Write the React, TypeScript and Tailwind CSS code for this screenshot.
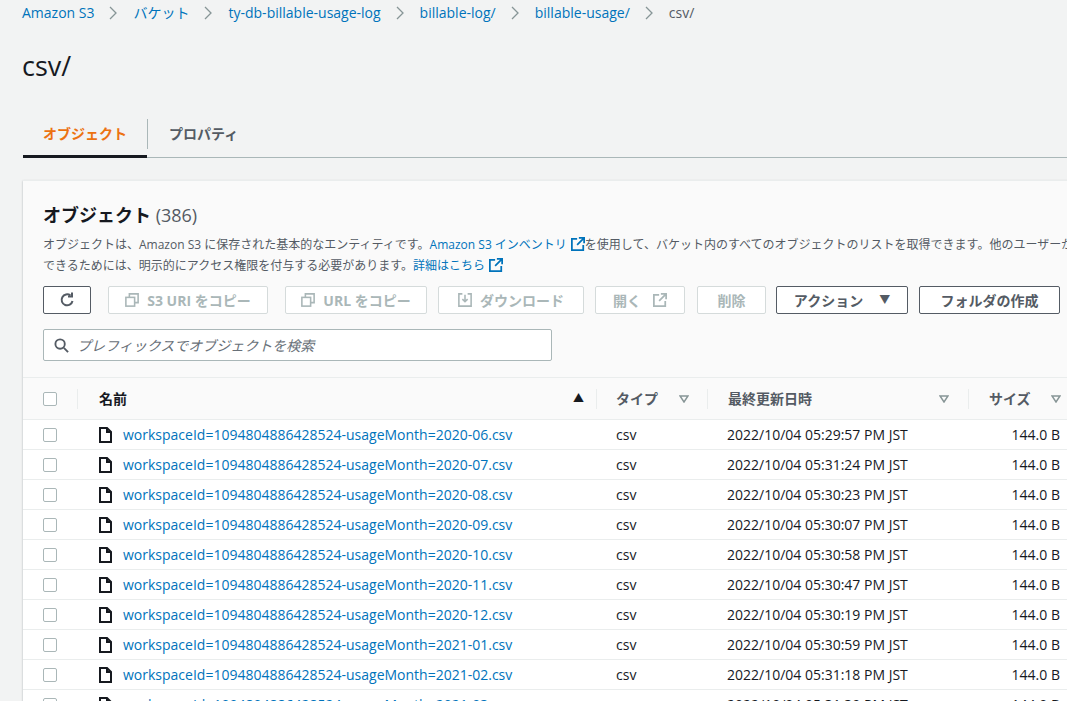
import React from "react";

const F = { fontFamily: '"Open Sans", "Noto Sans CJK JP", sans-serif' };

const months = ["2020-06", "2020-07", "2020-08", "2020-09", "2020-10", "2020-11", "2020-12", "2021-01", "2021-02", "2021-03"];
const times = ["05:29:57", "05:31:24", "05:30:23", "05:30:07", "05:30:58", "05:30:47", "05:30:19", "05:30:59", "05:31:18", "05:31:39"];

const Ext = () => (
  <svg width="14" height="14" viewBox="0 0 16 16" className="inline-block align-[-2px] ml-1" fill="none" stroke="currentColor" strokeWidth="2">
    <path d="M9 1h6v6M15 1L7 9M7 2H1v13h13V9" />
  </svg>
);

const Copy = () => (
  <svg width="14" height="14" viewBox="0 0 16 16" fill="none" stroke="currentColor" strokeWidth="1.8">
    <rect x="1" y="5" width="10" height="10" />
    <path d="M5 5V1h10v10h-4" />
  </svg>
);

const FileIcon = () => (
  <svg width="13" height="16" viewBox="0 0 13 16" fill="none" stroke="#16191f" strokeWidth="2">
    <path d="M1 1h7l4 4v10H1z M8 1v4h4" />
  </svg>
);

const Tri = () => (
  <svg width="10" height="8" viewBox="0 0 10 8" fill="none" stroke="#879596" strokeWidth="1.5">
    <path d="M1 1h8L5 7z" />
  </svg>
);

const Box = () => <div className="w-[14px] h-[14px] border border-[#aab7b8] rounded-[2px] bg-white" />;

function Btn({ w, ml, disabled, children }: { w: number; ml: number; disabled?: boolean; children: React.ReactNode }) {
  return (
    <div
      style={{ width: w, marginLeft: ml }}
      className={`h-[28px] flex items-center justify-center gap-2 rounded-[2px] text-[14px] font-bold shrink-0 ${
        disabled ? "border border-[#d5dbdb] text-[#aab7b8] bg-white" : "border border-[#545b64] text-[#545b64] bg-white"
      }`}
    >
      {children}
    </div>
  );
}

export default function App() {
  return (
    <div style={F} className="w-[1067px] h-[701px] overflow-hidden bg-[#f2f3f3] text-[#16191f]">
      <div className="pl-[22px] pt-[5px] flex items-center gap-[15px] text-[14px] h-[20px]">
        {["Amazon S3", "バケット", "ty-db-billable-usage-log", "billable-log/", "billable-usage/"].map((t) => (
          <React.Fragment key={t}>
            <span className="text-[#0073bb]">{t}</span>
            <span className="text-[#879596]">
              <svg width="9" height="14" viewBox="0 0 9 14" fill="none" stroke="currentColor" strokeWidth="1.3"><path d="M1 1l6 6-6 6" /></svg>
            </span>
          </React.Fragment>
        ))}
        <span className="text-[#545b64]">csv/</span>
      </div>
      <div className="pl-[22px] mt-[28px] text-[27px] leading-[36px]">csv/</div>

      <div className="ml-[23px] mt-[26px] flex items-center border-b border-[#aab7b8] h-[48px]">
        <div className="w-[124px] h-full flex items-center justify-center text-[14px] font-bold text-[#ec7211] border-b-[3px] border-[#16191f] -mb-[1px] pt-[2px]">オブジェクト</div>
        <div className="w-px h-[30px] bg-[#aab7b8]" />
        <div className="px-[21px] text-[14px] font-bold text-[#545b64]">プロパティ</div>
      </div>

      <div className="ml-[23px] mt-[22px] w-[1100px] bg-[#fafafa] shadow-[0_1px_2px_rgba(0,28,36,0.3)] border-t border-[#eaeded]">
        <div className="px-[20px] pt-[22px]">
          <div className="text-[18px] font-bold leading-[24px]">
            オブジェクト <span className="font-normal text-[#545b64]">(386)</span>
          </div>
          <div className="mt-[7px] text-[12px] leading-[21px] text-[#545b64] whitespace-nowrap">
            オブジェクトは、Amazon S3 に保存された基本的なエンティティです。<span className="text-[#0073bb]">Amazon S3 インベントリ<Ext /></span>を使用して、バケット内のすべてのオブジェクトのリストを取得できます。他のユーザーがオブジェクトにアクセス
            <br />
            できるためには、明示的にアクセス権限を付与する必要があります。<span className="text-[#0073bb]">詳細はこちら<Ext /></span>
          </div>
          <div className="mt-[10px] flex items-center">
            <Btn w={48} ml={0}>
              <svg width="16" height="16" viewBox="0 0 16 16" fill="none" stroke="#545b64" strokeWidth="2"><path d="M13.5 9A5.5 5.5 0 1 1 11.5 3.5" /><path d="M9 3.5h4V-0.5" transform="translate(0 1)" /></svg>
            </Btn>
            <Btn w={160} ml={17} disabled><Copy />S3 URI をコピー</Btn>
            <Btn w={142} ml={17} disabled><Copy />URL をコピー</Btn>
            <Btn w={146} ml={11} disabled>
              <svg width="14" height="14" viewBox="0 0 16 16" fill="none" stroke="currentColor" strokeWidth="1.8"><path d="M5 1H1v14h14V1h-4M8 2v8M5 7l3 3 3-3" /></svg>
              ダウンロード
            </Btn>
            <Btn w={90} ml={11} disabled>開く<Ext /></Btn>
            <Btn w={69} ml={12} disabled>削除</Btn>
            <Btn w={132} ml={10}>アクション <span className="text-[11px] ml-2">▼</span></Btn>
            <Btn w={141} ml={11}>フォルダの作成</Btn>
          </div>
          <div className="mt-[15px] w-[509px] h-[32px] border border-[#aab7b8] rounded-[2px] bg-white flex items-center px-[10px] gap-[8px]">
            <svg width="15" height="15" viewBox="0 0 16 16" fill="none" stroke="#545b64" strokeWidth="2"><circle cx="6.5" cy="6.5" r="5" /><path d="M10.5 10.5L15 15" /></svg>
            <span className="text-[14px] italic text-[#687078]">プレフィックスでオブジェクトを検索</span>
          </div>
        </div>

        <div className="mt-[16px] border-t border-[#eaeded]">
          <div className="h-[42px] flex items-center text-[14px] font-bold text-[#545b64] border-b border-[#eaeded]">
            <div className="w-[54px] pl-[20px] flex items-center"><Box /></div>
            <div className="w-px h-[20px] bg-[#eaeded]" />
            <div className="w-[518px] pl-[21px] flex items-center justify-between pr-[12px]">
              <span className="text-[#16191f]">名前</span><span className="text-[11px] text-[#16191f]">▲</span>
            </div>
            <div className="w-px h-[20px] bg-[#eaeded]" />
            <div className="w-[110px] pl-[19px] pr-[18px] flex items-center justify-between"><span>タイプ</span><Tri /></div>
            <div className="w-px h-[20px] bg-[#eaeded]" />
            <div className="w-[260px] pl-[20px] pr-[19px] flex items-center justify-between"><span>最終更新日時</span><Tri /></div>
            <div className="w-px h-[20px] bg-[#eaeded]" />
            <div className="w-[98px] pl-[20px] pr-[6px] flex items-center justify-between"><span>サイズ</span><Tri /></div>
          </div>
          {months.map((m, i) => (
            <div key={m} className="h-[30px] flex items-center text-[14px] border-b border-[#eaeded] bg-white">
              <div className="w-[55px] pl-[20px] flex items-center"><Box /></div>
              <div className="w-[518px] pl-[21px] flex items-center gap-[11px]">
                <FileIcon />
                <span className="text-[#0073bb]">workspaceId=1094804886428524-usageMonth={m}.csv</span>
              </div>
              <div className="w-[111px] pl-[20px]">csv</div>
              <div className="w-[261px] pl-[20px]">2022/10/04 {times[i]} PM JST</div>
              <div className="w-[92px] text-right">144.0 B</div>
            </div>
          ))}
        </div>
      </div>
    </div>
  );
}
